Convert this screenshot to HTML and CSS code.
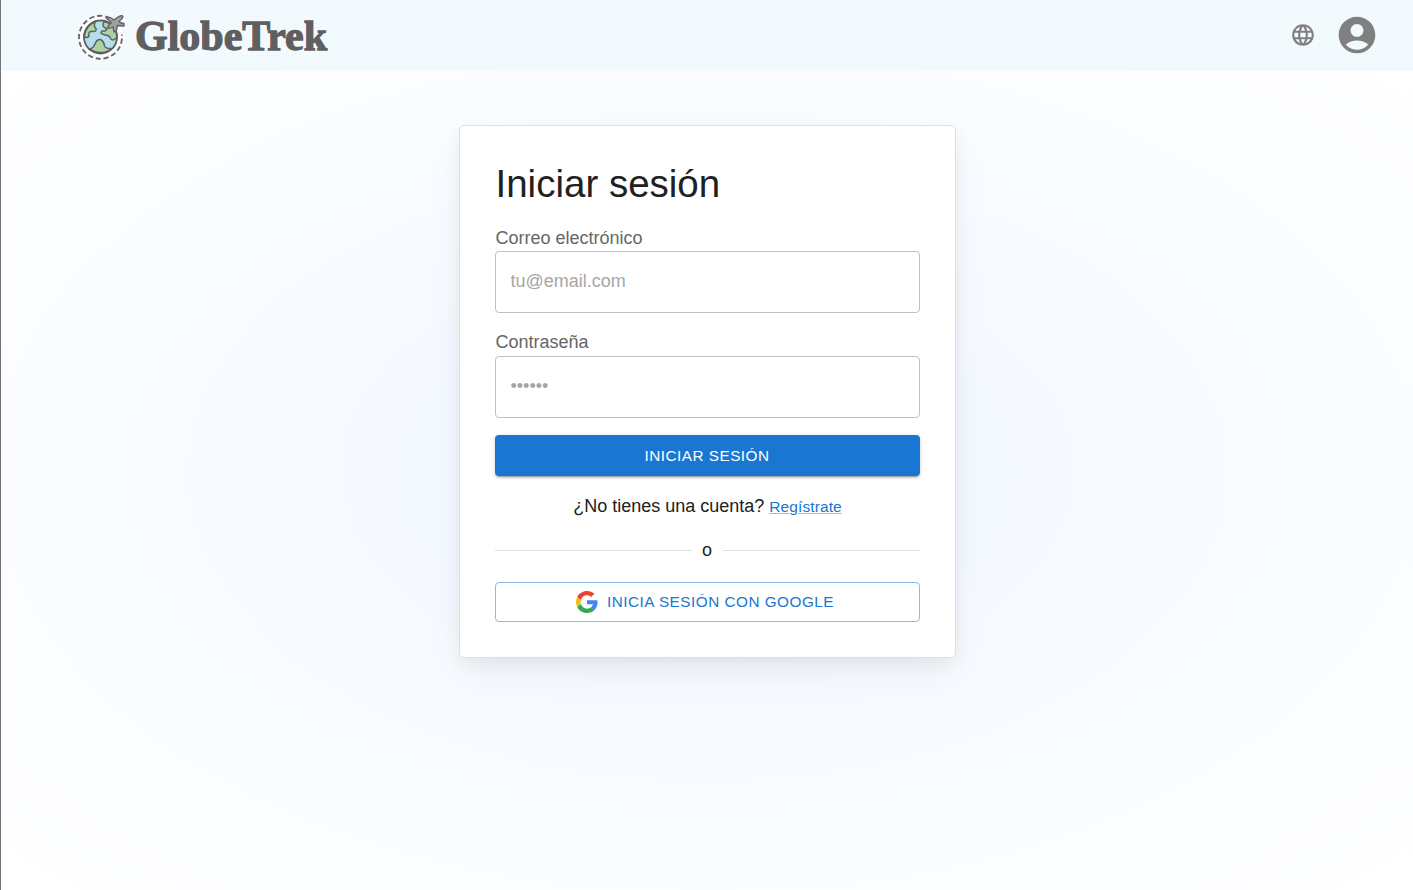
FILE: index.html
```html
<!DOCTYPE html>
<html lang="es">
<head>
<meta charset="utf-8">
<title>GlobeTrek</title>
<link rel="stylesheet" href="styles.css">
</head>
<body>
<header class="topbar">
  <a class="brand">
    <svg class="brand-globe" width="50" height="48" viewBox="0 0 50 48">
      <circle cx="23.500" cy="24.5" r="21.5" fill="none" stroke="#fff" stroke-width="3"/>
      <path d="M33 5A21.5 21.5 0 1 0 44.800 21.500" fill="none" stroke="#68686a" stroke-width="1.9" stroke-dasharray="5.2 2.8"/>
      <circle cx="23.500" cy="24" r="17.500" fill="#b4deec" stroke="#fff" stroke-width="4"/>
      <g fill="#a8d5a0" stroke="#5f5f61" stroke-width="1.5" stroke-linejoin="round">
        <path d="M18.500 8.500Q9 12 7 23Q10 26 12 23Q11 18 15 18.500Q20 19 19 15.500Q16 13 18.500 8.500Z"/>
        <path d="M27 8.500L31 9.500L37 14Q41 21 39.500 25Q35 29 33 24.500Q32 22 28 22Q22 20.500 25 18Q30 18.500 29.500 15.500Q24 14 27 8.500Z"/>
        <path d="M12 36C15 36 17 34 18.500 30Q20 26 23.500 26.500Q27 28.500 27.500 33Q29 36 34.500 35.500Q25 43.500 12 36Z"/>
      </g>
      <circle cx="23.500" cy="24" r="16.500" fill="none" stroke="#5f5f61" stroke-width="1.9"/>
      <path d="M29 5Q33 3 37 7L41 4Q45 1.500 46 3.500Q45.500 6 42 8.500Q44 10.500 47 10.500V13L40.500 12.500L39.500 17.500L37 19L36 14Q32 16 30.500 15Q31 12 34.500 9.500Z" fill="#a0a0a2" stroke="#5f5f61" stroke-width="1.3" stroke-linejoin="round"/>
    </svg>
    <svg class="brand-name" width="200" height="48" viewBox="0 0 200 48">
      <text class="wordmark" x="2" y="37" textLength="192" lengthAdjust="spacingAndGlyphs">GlobeTrek</text>
    </svg>
  </a>
  <nav class="actions">
    <svg width="26" height="26" viewBox="0 0 24 24" fill="#808080"><path d="M11.99 2C6.47 2 2 6.48 2 12s4.47 10 9.99 10C17.52 22 22 17.52 22 12S17.52 2 11.99 2zm6.93 6h-2.95c-.32-1.25-.78-2.45-1.38-3.560 1.840.63 3.370 1.910 4.330 3.560zM12 4.040c.83 1.200 1.480 2.530 1.910 3.960h-3.820c.43-1.430 1.080-2.760 1.910-3.960zM4.260 14C4.100 13.360 4 12.690 4 12s.1-1.360.26-2h3.380c-.08.66-.14 1.320-.14 2 0 .68.06 1.340.14 2H4.260zm.82 2h2.950c.32 1.250.78 2.450 1.380 3.560-1.840-.63-3.370-1.900-4.330-3.560zm2.950-8H5.080c.96-1.660 2.490-2.930 4.330-3.560C8.810 5.550 8.350 6.750 8.030 8zM12 19.960c-.83-1.200-1.480-2.530-1.910-3.960h3.820c-.43 1.430-1.080 2.760-1.910 3.960zM14.340 14H9.660c-.09-.66-.16-1.320-.16-2 0-.68.07-1.350.16-2h4.680c.09.65.16 1.320.16 2 0 .68-.07 1.340-.16 2zm.25 5.560c.6-1.110 1.060-2.310 1.380-3.560h2.950c-.96 1.650-2.490 2.930-4.330 3.560zM16.360 14c.08-.66.14-1.320.14-2 0-.68-.06-1.340-.14-2h3.380c.16.64.26 1.310.26 2s-.1 1.360-.26 2h-3.380z"/></svg>
    <svg width="44" height="44" viewBox="0 0 24 24" fill="#808080"><path d="M12 2C6.480 2 2 6.480 2 12s4.480 10 10 10 10-4.480 10-10S17.520 2 12 2zm0 4c1.930 0 3.500 1.570 3.500 3.500S13.930 13 12 13s-3.500-1.570-3.500-3.500S10.070 6 12 6zm0 14c-2.030 0-4.430-.82-6.140-2.880C7.550 15.800 9.680 15 12 15s4.450.8 6.140 2.120C16.430 19.180 14.030 20 12 20z"/></svg>
  </nav>
</header>
<main class="page">
  <section class="card">
    <h1 class="title">Iniciar sesión</h1>
    <form class="form">
      <div class="field">
        <label class="label" for="email">Correo electrónico</label>
        <input class="input" id="email" type="email" placeholder="tu@email.com">
      </div>
      <div class="field">
        <label class="label compact" for="password">Contraseña</label>
        <input class="input" id="password" type="password" placeholder="••••••">
      </div>
      <button class="button primary" type="button">INICIAR SESIÓN</button>
      <p class="signup">¿No tienes una cuenta? <a class="link">Regístrate</a></p>
    </form>
    <div class="divider">o</div>
    <button class="button outlined" type="button">
      <svg width="22" height="22" viewBox="0 0 48 48"><path fill="#EA4335" d="M24 9.500c3.540 0 6.710 1.220 9.210 3.600l6.850-6.850C35.900 2.380 30.470 0 24 0 14.620 0 6.510 5.380 2.560 13.220l7.980 6.190C12.430 13.720 17.740 9.500 24 9.500z"/><path fill="#4285F4" d="M46.980 24.550c0-1.570-.15-3.090-.38-4.550H24v9.020h12.940c-.58 2.960-2.260 5.480-4.780 7.180l7.730 6c4.510-4.180 7.090-10.360 7.090-17.650z"/><path fill="#FBBC05" d="M10.530 28.590c-.48-1.450-.76-2.990-.76-4.590s.27-3.140.76-4.590l-7.980-6.190C.92 16.460 0 20.120 0 24c0 3.880.92 7.540 2.560 10.780l7.970-6.190z"/><path fill="#34A853" d="M24 48c6.480 0 11.930-2.130 15.890-5.810l-7.730-6c-2.150 1.450-4.920 2.300-8.160 2.300-6.260 0-11.570-4.220-13.470-9.910l-7.980 6.190C6.510 42.620 14.620 48 24 48z"/></svg>
      <span class="provider">INICIA SESIÓN CON GOOGLE</span>
    </button>
  </section>
</main>
</body>
</html>
```
FILE: styles.css
```css
* { box-sizing: border-box; }
body {
  margin: 0;
  height: 890px;
  display: flex;
  flex-direction: column;
  overflow: hidden;
  border-left: 1px solid #747476;
  background: #fff;
  color: #212121;
  font: 18px/27px "Liberation Sans", Arial, sans-serif;
}
.topbar {
  height: 71px;
  flex: none;
  display: flex;
  align-items: center;
  justify-content: space-between;
  padding: 0 34px 1px 76px;
  background: #f3fafd;
}
.brand { display: flex; gap: 6px; padding-top: 3px; }
.wordmark {
  font: bold 42.5px "Liberation Serif", serif;
  fill: #5f5f61;
  stroke: #5f5f61;
  stroke-width: 1.3px;
}
.actions { display: flex; align-items: center; gap: 19px; }
.page {
  flex: 1;
  padding-top: 54px;
  background: radial-gradient(ellipse at 50% 49%, #f0f7ff, #fff);
}
.card {
  width: 497px;
  height: 533px;
  margin: 0 auto;
  padding: 35px;
  border: 1px solid #dedfe2;
  border-radius: 5px;
  background: #fff;
  box-shadow: 0 6px 17px rgba(9, 11, 17, .05), 0 17px 39px -6px rgba(19, 25, 32, .06);
}
.title {
  margin: 0;
  height: 46px;
  padding-left: 1px;
  font-size: 38.5px;
  font-weight: 400;
  line-height: 46px;
}
.form { display: flex; flex-direction: column; gap: 17px; margin-top: 18px; }
.field { display: flex; flex-direction: column; }
.label { height: 26px; padding-left: 1px; line-height: 26px; color: #666; }
.compact { line-height: 24px; }
.input {
  height: 62px;
  padding: 0 15px 2px;
  border: 1px solid #c0c0c0;
  border-radius: 4px;
  background: #fff;
  font: inherit;
}
.input::placeholder { color: #a6a6a6; opacity: 1; }
.button {
  width: 100%;
  display: flex;
  align-items: center;
  justify-content: center;
  border-radius: 4px;
  font: 15.3px/27px "Liberation Sans", Arial, sans-serif;
}
.primary {
  height: 41px;
  border: 0;
  background: #1976d2;
  color: #fff;
  letter-spacing: .5px;
  box-shadow: 0 3px 1px -2px rgba(0, 0, 0, .2), 0 2px 2px rgba(0, 0, 0, .14), 0 1px 5px rgba(0, 0, 0, .12);
}
.signup { margin: 0; padding-left: 1px; text-align: center; }
.link { color: #1976d2; font-size: 15.5px; letter-spacing: .1px; text-decoration: underline #94bde8; }
.divider { display: flex; align-items: center; gap: 10.5px; margin: 17px 0 18px; }
.divider::before, .divider::after { content: ""; flex: 1; border-top: 1px solid #e0e0e0; }
.outlined {
  height: 40px;
  gap: 9px;
  padding: 0 8px 0 4px;
  border: 1px solid #8cbae8;
  background: #fff;
  color: #1976d2;
  letter-spacing: .5px;
}
.provider { padding-bottom: 2px; }
```
